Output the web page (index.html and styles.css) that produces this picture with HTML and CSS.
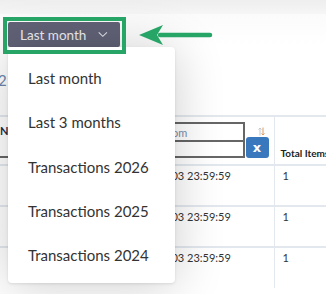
FILE: index.html
```html
<!DOCTYPE html>
<html>
    <head>
        <meta charset="utf-8">
        <title>Transactions</title>
        <link rel="stylesheet" href="styles.css">
    </head>
    <body>
        <div class="topbar"></div>

        <div class="toolbar">
            <button class="range-button">
                <span>Last month</span>
                <svg class="chevron" width="11" height="7" viewBox="0 0 11 7">
                    <path d="M0.8 1 L5.5 5.6 L10.2 1" fill="none" stroke="#e4e4ea" stroke-width="1.2"/>
                </svg>
            </button>
        </div>

        <div class="summary">2</div>

        <table class="grid">
            <colgroup>
                <col class="c-name">
                <col class="c-date">
                <col class="c-total">
            </colgroup>
            <tr class="head">
                <th class="col-name">
                    <div class="label">Name</div>
                    <input type="text" class="name-filter">
                </th>
                <th class="col-date">
                    <div class="filter">
                        <div class="inputs">
                            <input type="text" placeholder="From">
                            <input type="text">
                        </div>
                        <svg class="sort" width="7" height="9" viewBox="0 0 7 9">
                            <path d="M2 8.5 V1 M0.5 2.5 L2 1 L3.5 2.5" fill="none" stroke="#c3c7cf" stroke-width="1"/>
                            <path d="M5 0.5 V8 M3.5 6.5 L5 8 L6.5 6.5" fill="none" stroke="#e39a5c" stroke-width="1"/>
                        </svg>
                        <button class="clear">x</button>
                    </div>
                </th>
                <th class="col-total">Total Items</th>
            </tr>
            <tr>
                <td class="col-name"></td>
                <td class="col-date">2026-01-03 23:59:59</td>
                <td class="col-total">1</td>
            </tr>
            <tr>
                <td class="col-name"></td>
                <td class="col-date">2025-12-03 23:59:59</td>
                <td class="col-total">1</td>
            </tr>
            <tr>
                <td class="col-name"></td>
                <td class="col-date">2025-11-03 23:59:59</td>
                <td class="col-total">1</td>
            </tr>
        </table>

        <!-- open menu of the range button -->
        <ul class="range-menu">
            <li>Last month</li>
            <li>Last 3 months</li>
            <li>Transactions 2026</li>
            <li>Transactions 2025</li>
            <li>Transactions 2024</li>
        </ul>

        <!-- annotation: green frame + arrow -->
        <div class="mark-frame"></div>
        <svg class="mark-arrow" width="80" height="28" viewBox="0 0 80 28">
            <path d="M22 14 H72" stroke="#27a567" stroke-width="4.5" stroke-linecap="round"/>
            <path d="M1 14 L25 4 L19 14 L25 24 Z" fill="#27a567"/>
        </svg>
    </body>
</html>
```

FILE: styles.css
```css
body {
    margin: 0;
    width: 326px;
    height: 294px;
    overflow: hidden;
    position: relative;
    background: #fff;
    font-family: Lato, "Open Sans", sans-serif;
    color: #333;
}

.topbar {
    height: 14px;
    background: linear-gradient(#eeeeee, #f6f6f6);
}

/* Toolbar */

.toolbar {
    display: flex;
    align-items: flex-start;
    height: 33px;
    padding-left: 8px;
    background: linear-gradient(#fbfbfb, #ffffff);
}

.range-button {
    display: flex;
    align-items: center;
    gap: 12px;
    margin-top: 8px;
    padding: 0 12px;
    width: 112px;
    height: 25px;
    border: 0;
    border-radius: 2px;
    background: #616276;
    color: #eeeef2;
    font-family: Lato, sans-serif;
    font-size: 13.5px;
    white-space: nowrap;
}

.summary {
    height: 68px;
    margin-left: -2px;
    line-height: 66px;
    font-size: 15px;
    color: #6b86ad;
}

/* Table behind the menu */

.grid {
    table-layout: fixed;
    width: 360px;
    border-collapse: collapse;
    font-size: 11px;
    color: #333;
}

.c-name {
    width: 125px;
}

.c-date {
    width: 149px;
}

.c-total {
    width: 86px;
}

.grid th,
.grid td {
    border-top: 2px solid #e3e8ef;
    padding: 3px 7px 0;
    line-height: 14px;
    text-align: left;
    vertical-align: top;
    white-space: nowrap;
}

.grid tr {
    height: 41px;
}

.grid .head {
    height: 49px;
}

.grid th {
    vertical-align: bottom;
    padding: 0 5px 6px 0;
}

.grid .col-date {
    border-right: 1px solid #e3e8ef;
}

.grid td.col-date {
    padding-left: 0;
}

.grid th.col-total {
    padding-left: 6px;
    padding-bottom: 4px;
    font-size: 10px;
    font-weight: bold;
    color: #222;
}

.grid td.col-total {
    padding-left: 8px;
}

.label {
    margin-bottom: 14px;
    font-weight: bold;
    color: #1f2d4a;
}

.name-filter {
    display: block;
    box-sizing: border-box;
    width: 110px;
    height: 6px;
    border: 0;
    border-bottom: 2px solid #666;
    padding: 0;
}

.filter {
    display: flex;
    align-items: flex-end;
    justify-content: flex-end;
    position: relative;
}

.inputs {
    display: flex;
    flex-direction: column;
}

.inputs input {
    box-sizing: border-box;
    width: 110px;
    height: 18px;
    border: 2px solid #666;
    border-bottom-width: 0;
    padding: 0 4px 0 26px;
    font-family: Lato, sans-serif;
    font-size: 11px;
}

.inputs input:last-child {
    border-bottom-width: 2px;
}

.inputs input::placeholder {
    color: #7c8ea8;
}

.sort {
    position: absolute;
    right: 4px;
    top: 5px;
}

.clear {
    margin-left: 1px;
    width: 23px;
    height: 21px;
    border: 0;
    border-radius: 3px;
    background: #3a78bd;
    color: #fff;
    font-family: "DejaVu Sans", sans-serif;
    font-weight: bold;
    font-size: 13px;
    padding: 0;
}

/* Dropdown menu */

.range-menu {
    position: absolute;
    left: 8px;
    top: 47px;
    width: 167px;
    margin: 0;
    padding: 9px 0 6px;
    list-style: none;
    background: #fff;
    border-radius: 4px;
    box-shadow: 0 2px 50px rgba(0, 0, 0, 0.2), 0 1px 3px rgba(0, 0, 0, 0.1);
}

.range-menu li {
    height: 44.25px;
    line-height: 44.25px;
    padding-left: 20px;
    font-size: 15px;
    color: #333;
}

/* Annotation */

.mark-frame {
    position: absolute;
    left: 3px;
    top: 17px;
    width: 115px;
    height: 29px;
    border: 4px solid #27a567;
}

.mark-arrow {
    position: absolute;
    left: 138px;
    top: 21px;
}
```
